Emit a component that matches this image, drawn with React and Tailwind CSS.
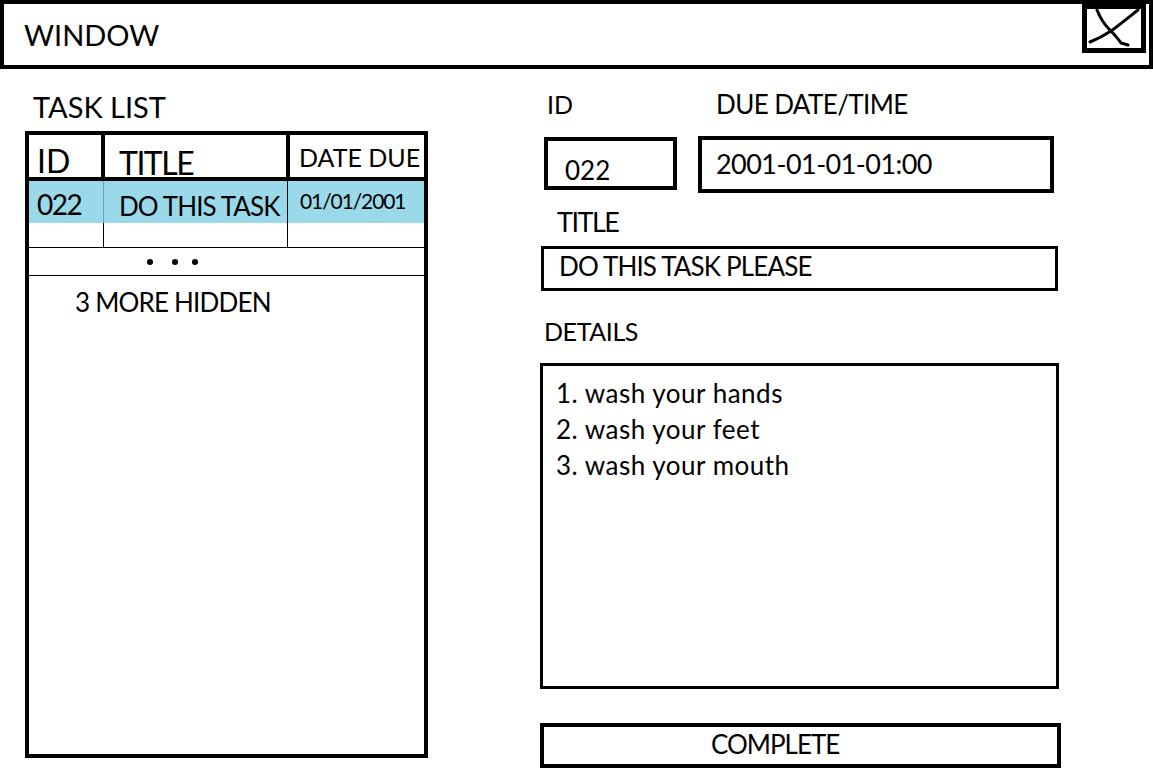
import React from 'react'

const font = { fontFamily: 'Lato, "Open Sans", sans-serif' }

function CloseButton() {
  return (
    <button className="mr-[3px] w-[64px] h-[49px] border-[5px] border-black bg-white self-start">
      <svg className="w-full h-full" viewBox="0 0 54 39" fill="none" stroke="black" strokeWidth={3} strokeLinecap="round">
        <path d="M10 1 C12 6, 16 14, 22 20 S32 31, 34 34 L41 36" />
        <path d="M51 1 C42 8, 30 18, 24 22 S8 31, 3 33" />
      </svg>
    </button>
  )
}

function TaskTable() {
  return (
    <div className="mt-[10px] w-[403px] h-[627px] border-4 border-black flex flex-col">
      {/* Header */}
      <div className="flex h-[46px] border-b-4 border-black">
        <div className="w-[72px] pl-[8px] pt-[10px] text-[32px] leading-none">ID</div>
        <div className="w-[4px] bg-black" />
        <div className="w-[181px] pl-[14px] pt-[12px] text-[32px] leading-none tracking-[-1.5px]">TITLE</div>
        <div className="w-[4px] bg-black" />
        <div className="flex-1 pl-[9px] pt-[10px] text-[25px] leading-none whitespace-nowrap">DATE DUE</div>
      </div>

      {/* Selected row */}
      <div className="flex h-[42px] bg-[#99d9ea]">
        <div className="w-[74px] pl-[8px] pt-[9px] text-[28px] leading-none tracking-[-1.5px]">022</div>
        <div className="w-px bg-[#5aa9bd]" />
        <div className="w-[183px] pl-[15px] pt-[12px] text-[26px] leading-none tracking-[-0.9px] whitespace-nowrap">DO THIS TASK</div>
        <div className="w-px bg-black" />
        <div className="flex-1 pl-[12px] pt-[9px] text-[21px] leading-none tracking-[-1.1px]">01/01/2001</div>
      </div>

      {/* Empty row */}
      <div className="flex h-[25px] border-b border-black">
        <div className="w-[74px]" />
        <div className="w-px bg-black" />
        <div className="w-[183px]" />
        <div className="w-px bg-black" />
        <div className="flex-1" />
      </div>

      {/* Ellipsis row */}
      <div className="flex items-center h-[28px] border-b border-black pl-[118px]">
        <span className="w-[6px] h-[6px] rounded-full bg-black" />
        <span className="ml-[19px] w-[6px] h-[6px] rounded-full bg-black" />
        <span className="ml-[14px] w-[6px] h-[6px] rounded-full bg-black" />
      </div>

      <div className="mt-[13px] pl-[46px] text-[26px] leading-none tracking-[-0.8px]">3 MORE HIDDEN</div>
    </div>
  )
}

function DetailsPanel() {
  return (
    <div className="ml-[112px] w-[521px] flex flex-col">
      <div className="mt-[22px] flex items-start h-[26px]">
        <div className="ml-[7px] mt-[1px] w-[155px] text-[25px] leading-none">ID</div>
        <div className="ml-[14px] text-[26px] leading-none tracking-[-0.6px]">DUE DATE/TIME</div>
      </div>

      <div className="mt-[19px] flex items-start">
        <div className="ml-[4px] mt-[1px] w-[133px] h-[53px] border-4 border-black pl-[17px] pt-[16px] text-[26px] leading-none">022</div>
        <div className="ml-[21px] w-[356px] h-[57px] border-4 border-black pl-[14px] pt-[10px] text-[27px] leading-none tracking-[-0.55px]">2001-01-01-01:00</div>
      </div>

      <div className="mt-[15px] ml-[17px] text-[27px] leading-none tracking-[-1.5px]">TITLE</div>
      <div className="mt-[11px] ml-[1px] w-[517px] h-[45px] border-[3px] border-black pl-[15px] pt-[4px] text-[26px] leading-none tracking-[-0.85px]">DO THIS TASK PLEASE</div>

      <div className="mt-[28px] ml-[4px] text-[25px] leading-none tracking-[-0.4px]">DETAILS</div>
      <div className="mt-[19px] w-[519px] h-[326px] border-[3px] border-black pl-[13px] pt-[9px] text-[26px] leading-[36px] tracking-[0.5px]">
        <div>1. wash your hands</div>
        <div>2. wash your feet</div>
        <div>3. wash your mouth</div>
      </div>

      <button className="mt-[34px] w-[521px] h-[45px] border-4 border-black text-left pl-[167px] pb-[4px] text-[26px] leading-none tracking-[-1px]">
        COMPLETE
      </button>
    </div>
  )
}

export default function App() {
  return (
    <div className="w-[1153px] h-[783px] bg-white text-black overflow-hidden" style={font}>
      {/* Title bar */}
      <div className="h-[69px] border-4 border-black flex justify-between">
        <div className="pl-[20px] pt-[16px] text-[29px] leading-none">WINDOW</div>
        <CloseButton />
      </div>

      <div className="flex">
        {/* Task list */}
        <div className="ml-[25px] flex flex-col">
          <div className="mt-[23px] ml-[8px] text-[29px] leading-none">TASK LIST</div>
          <TaskTable />
        </div>

        <DetailsPanel />
      </div>
    </div>
  )
}
